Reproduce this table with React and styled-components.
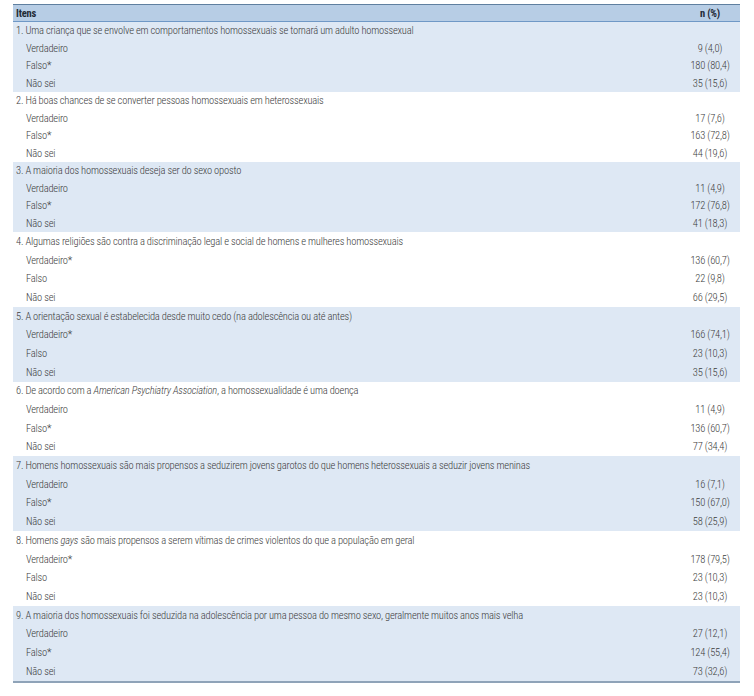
import React from 'react'
import styled, { createGlobalStyle } from 'styled-components'

const Global = createGlobalStyle`
  body {
    margin: 0;
    background: #ffffff;
    font-family: 'Roboto Condensed', 'Liberation Sans', sans-serif;
    color: #3c3c3c;
  }
`

const Table = styled.div`
  margin: 4px 0 0 13px;
  width: 727px;
  border-top: 1px solid #5f7f9f;
  border-bottom: 2px solid #8fa3b8;
  font-size: 10.5px;
  font-weight: 300;
  letter-spacing: -0.2px;
`

const Head = styled.div`
  display: flex;
  align-items: center;
  height: 16px;
  background: #b7cde5;
  border-bottom: 1px solid #6f98c6;
  font-weight: 700;
  color: #1f2a36;
`

const Group = styled.div`
  background: ${(p) => (p.$shaded ? '#dee8f4' : '#ffffff')};
`

const Row = styled.div`
  display: flex;
  align-items: center;
  height: ${(p) => p.$h}px;
`

const Label = styled.div`
  flex: 1;
  padding-left: ${(p) => (p.$sub ? 13 : 3)}px;
  white-space: nowrap;
`

const Em = styled.em`
  font-style: italic;
  font-weight: 300;
`

const Value = styled.div`
  width: 60px;
  text-align: center;
`

const groups = [
  {
    title: '1. Uma criança que se envolve em comportamentos homossexuais se tornará um adulto homossexual',
    rows: [['Verdadeiro', '9 (4,0)'], ['Falso*', '180 (80,4)'], ['Não sei', '35 (15,6)']],
  },
  {
    title: '2. Há boas chances de se converter pessoas homossexuais em heterossexuais',
    rows: [['Verdadeiro', '17 (7,6)'], ['Falso*', '163 (72,8)'], ['Não sei', '44 (19,6)']],
  },
  {
    title: '3. A maioria dos homossexuais deseja ser do sexo oposto',
    rows: [['Verdadeiro', '11 (4,9)'], ['Falso*', '172 (76,8)'], ['Não sei', '41 (18,3)']],
  },
  {
    title: '4. Algumas religiões são contra a discriminação legal e social de homens e mulheres homossexuais',
    rows: [['Verdadeiro*', '136 (60,7)'], ['Falso', '22 (9,8)'], ['Não sei', '66 (29,5)']],
  },
  {
    title: '5. A orientação sexual é estabelecida desde muito cedo (na adolescência ou até antes)',
    rows: [['Verdadeiro*', '166 (74,1)'], ['Falso', '23 (10,3)'], ['Não sei', '35 (15,6)']],
  },
  {
    title: (
      <>
        6. De acordo com a <Em>American Psychiatry Association</Em>, a homossexualidade é uma doença
      </>
    ),
    rows: [['Verdadeiro', '11 (4,9)'], ['Falso*', '136 (60,7)'], ['Não sei', '77 (34,4)']],
  },
  {
    title: '7. Homens homossexuais são mais propensos a seduzirem jovens garotos do que homens heterossexuais a seduzir jovens meninas',
    rows: [['Verdadeiro', '16 (7,1)'], ['Falso*', '150 (67,0)'], ['Não sei', '58 (25,9)']],
  },
  {
    title: (
      <>
        8. Homens <Em>gays</Em> são mais propensos a serem vítimas de crimes violentos do que a população em geral
      </>
    ),
    rows: [['Verdadeiro*', '178 (79,5)'], ['Falso', '23 (10,3)'], ['Não sei', '23 (10,3)']],
  },
  {
    title: '9. A maioria dos homossexuais foi seduzida na adolescência por uma pessoa do mesmo sexo, geralmente muitos anos mais velha',
    rows: [['Verdadeiro', '27 (12,1)'], ['Falso*', '124 (55,4)'], ['Não sei', '73 (32,6)']],
  },
]

const App = () => {
  return (
    <>
      <Global />
      <Table>
        <Head>
          <Label>Itens</Label>
          <Value>n (%)</Value>
        </Head>
        {groups.map((g, i) => {
          const h = i < 3 ? 17.5 : 18.7
          return (
            <Group key={i} $shaded={i % 2 === 0}>
              <Row $h={h}>
                <Label>{g.title}</Label>
              </Row>
              {g.rows.map(([label, value]) => (
                <Row key={label} $h={h}>
                  <Label $sub>{label}</Label>
                  <Value>{value}</Value>
                </Row>
              ))}
            </Group>
          )
        })}
      </Table>
    </>
  )
}

export default App
